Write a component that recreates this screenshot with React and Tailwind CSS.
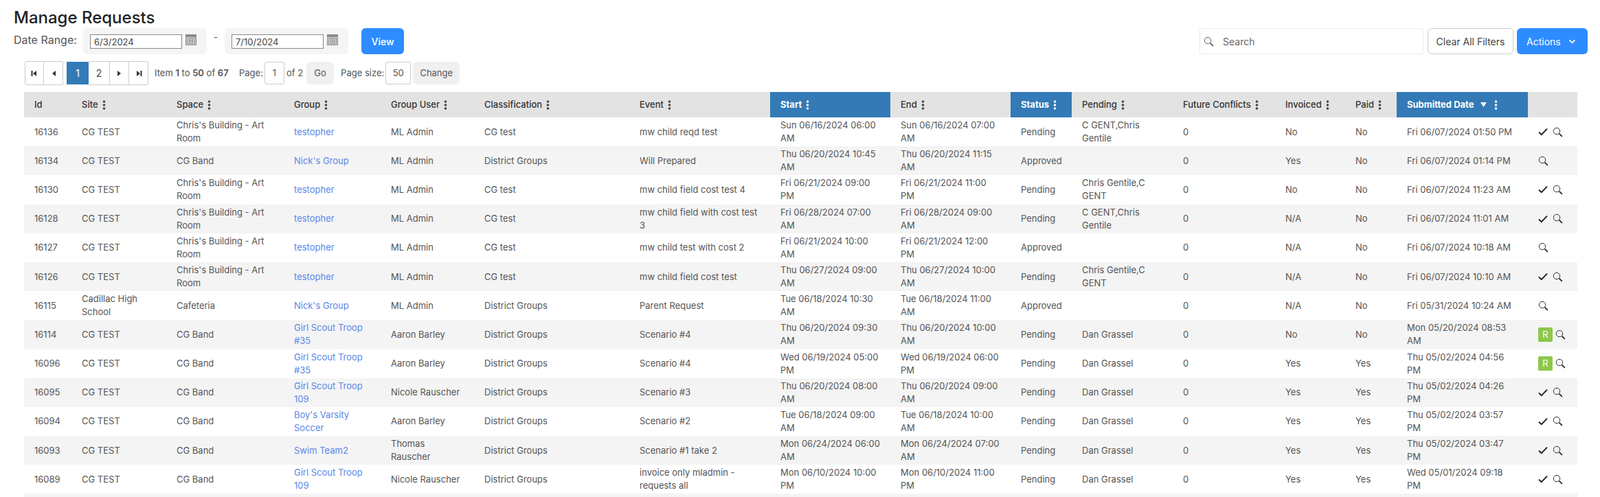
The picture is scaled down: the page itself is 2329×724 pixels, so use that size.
import React from 'react';

const building = "Chris's Building - Art Room";

const columns = [
  { label: 'Id', width: 'w-[69px]' },
  { label: 'Site', width: 'w-[138px]', menu: true },
  { label: 'Space', width: 'w-[171px]', menu: true },
  { label: 'Group', width: 'w-[141px]', menu: true },
  { label: 'Group User', width: 'w-[136px]', menu: true },
  { label: 'Classification', width: 'w-[226px]', menu: true },
  { label: 'Event', width: 'w-[205px]', menu: true },
  { label: 'Start', width: 'w-[175px]', menu: true, sorted: true },
  { label: 'End', width: 'w-[175px]', menu: true },
  { label: 'Status', width: 'w-[89px]', menu: true, sorted: true },
  { label: 'Pending', width: 'w-[147px]', menu: true },
  { label: 'Future Conflicts', width: 'w-[149px]', menu: true },
  { label: 'Invoiced', width: 'w-[102px]', menu: true },
  { label: 'Paid', width: 'w-[75px]', menu: true },
  { label: 'Submitted Date', width: 'w-[191px]', menu: true, sorted: true, arrow: true },
  { label: '', width: 'w-[72px]' },
];

const rows = [
  ['16136', 'CG TEST', building, 'testopher', 'ML Admin', 'CG test', 'mw child reqd test', 'Sun 06/16/2024 06:00 AM', 'Sun 06/16/2024 07:00 AM', 'Pending', 'C GENT,Chris Gentile', '0', 'No', 'No', 'Fri 06/07/2024 01:50 PM', 'check'],
  ['16134', 'CG TEST', 'CG Band', "Nick's Group", 'ML Admin', 'District Groups', 'Will Prepared', 'Thu 06/20/2024 10:45 AM', 'Thu 06/20/2024 11:15 AM', 'Approved', '', '0', 'Yes', 'No', 'Fri 06/07/2024 01:14 PM', 'view'],
  ['16130', 'CG TEST', building, 'testopher', 'ML Admin', 'CG test', 'mw child field cost test 4', 'Fri 06/21/2024 09:00 PM', 'Fri 06/21/2024 11:00 PM', 'Pending', 'Chris Gentile,C GENT', '0', 'No', 'No', 'Fri 06/07/2024 11:23 AM', 'check'],
  ['16128', 'CG TEST', building, 'testopher', 'ML Admin', 'CG test', 'mw child field with cost test 3', 'Fri 06/28/2024 07:00 AM', 'Fri 06/28/2024 09:00 AM', 'Pending', 'C GENT,Chris Gentile', '0', 'N/A', 'No', 'Fri 06/07/2024 11:01 AM', 'check'],
  ['16127', 'CG TEST', building, 'testopher', 'ML Admin', 'CG test', 'mw child test with cost 2', 'Fri 06/21/2024 10:00 AM', 'Fri 06/21/2024 12:00 PM', 'Approved', '', '0', 'N/A', 'No', 'Fri 06/07/2024 10:18 AM', 'view'],
  ['16126', 'CG TEST', building, 'testopher', 'ML Admin', 'CG test', 'mw child field cost test', 'Thu 06/27/2024 09:00 AM', 'Thu 06/27/2024 10:00 AM', 'Pending', 'Chris Gentile,C GENT', '0', 'N/A', 'No', 'Fri 06/07/2024 10:10 AM', 'check'],
  ['16115', 'Cadillac High School', 'Cafeteria', "Nick's Group", 'ML Admin', 'District Groups', 'Parent Request', 'Tue 06/18/2024 10:30 AM', 'Tue 06/18/2024 11:00 AM', 'Approved', '', '0', 'N/A', 'No', 'Fri 05/31/2024 10:24 AM', 'view'],
  ['16114', 'CG TEST', 'CG Band', 'Girl Scout Troop #35', 'Aaron Barley', 'District Groups', 'Scenario #4', 'Thu 06/20/2024 09:30 AM', 'Thu 06/20/2024 10:00 AM', 'Pending', 'Dan Grassel', '0', 'No', 'No', 'Mon 05/20/2024 08:53 AM', 'resend'],
  ['16096', 'CG TEST', 'CG Band', 'Girl Scout Troop #35', 'Aaron Barley', 'District Groups', 'Scenario #4', 'Wed 06/19/2024 05:00 PM', 'Wed 06/19/2024 06:00 PM', 'Pending', 'Dan Grassel', '0', 'Yes', 'Yes', 'Thu 05/02/2024 04:56 PM', 'resend'],
  ['16095', 'CG TEST', 'CG Band', 'Girl Scout Troop 109', 'Nicole Rauscher', 'District Groups', 'Scenario #3', 'Thu 06/20/2024 08:00 AM', 'Thu 06/20/2024 09:00 AM', 'Pending', 'Dan Grassel', '0', 'Yes', 'Yes', 'Thu 05/02/2024 04:26 PM', 'check'],
  ['16094', 'CG TEST', 'CG Band', "Boy's Varsity Soccer", 'Aaron Barley', 'District Groups', 'Scenario #2', 'Tue 06/18/2024 09:00 AM', 'Tue 06/18/2024 10:00 AM', 'Pending', 'Dan Grassel', '0', 'Yes', 'Yes', 'Thu 05/02/2024 03:57 PM', 'check'],
  ['16093', 'CG TEST', 'CG Band', 'Swim Team2', 'Thomas Rauscher', 'District Groups', 'Scenario #1 take 2', 'Mon 06/24/2024 06:00 AM', 'Mon 06/24/2024 07:00 AM', 'Pending', 'Dan Grassel', '0', 'Yes', 'Yes', 'Thu 05/02/2024 03:47 PM', 'check'],
  ['16089', 'CG TEST', 'CG Band', 'Girl Scout Troop 109', 'Nicole Rauscher', 'District Groups', 'invoice only mladmin - requests all', 'Mon 06/10/2024 10:00 PM', 'Mon 06/10/2024 11:00 PM', 'Pending', 'Dan Grassel', '0', 'Yes', 'Yes', 'Wed 05/01/2024 09:18 PM', 'check'],
];

const Magnifier = ({ className }) => (
  <svg viewBox="0 0 16 16" className={className} fill="none" stroke="currentColor">
    <circle cx="6.4" cy="6.4" r="5" strokeWidth="1" />
    <path d="M10.2 10.2 14.8 14.8" strokeWidth="1.8" />
  </svg>
);

const Check = () => (
  <svg viewBox="0 0 14 12" className="w-[14px] h-[12px] text-[#222]" fill="none" stroke="currentColor">
    <path d="M1 6.5 4.8 10.2 13 1.6" strokeWidth="2" />
  </svg>
);

const Kebab = ({ className = 'text-[#444]' }) => (
  <svg viewBox="0 0 5 14" className={`w-[5px] h-[14px] ${className}`} fill="currentColor">
    <circle cx="2.5" cy="2" r="1.8" />
    <circle cx="2.5" cy="7" r="1.8" />
    <circle cx="2.5" cy="12" r="1.8" />
  </svg>
);

const CalendarIcon = () => (
  <svg viewBox="0 0 16 16" className="w-[16px] h-[16px] ml-[5px]" fill="none">
    <rect x="0.5" y="0.5" width="15" height="15" fill="#d9d9d9" stroke="#8a8a8a" />
    <rect x="0.5" y="0.5" width="15" height="3" fill="#8a8a8a" stroke="#8a8a8a" />
    <rect x="2.5" y="5.5" width="11" height="8" fill="#f4f4f4" stroke="#8a8a8a" />
    <path d="M5.5 5.5v8M8 5.5v8M10.5 5.5v8M2.5 8.2h11M2.5 10.8h11" stroke="#8a8a8a" />
  </svg>
);

const PagerArrow = ({ dir, bar }) => (
  <svg viewBox="0 0 10 10" className={`w-[10px] h-[10px] ${dir === 'left' ? '' : 'rotate-180'}`} fill="#333">
    <path d="M8 1v8L3 5z" />
    {bar && <rect x="0.5" y="1" width="2" height="8" />}
  </svg>
);

const DateField = ({ value }) => (
  <div className="w-[180px] h-[38px] bg-[#f5f5f5] rounded-md flex items-start pt-[9px] pl-[10px]">
    <input readOnly value={value} className="w-[134px] h-[21px] border border-[#888] bg-white px-[5px] text-[13px] text-[#444] outline-none" />
    <CalendarIcon />
  </div>
);

const PagerButton = ({ className = '', children }) => (
  <button className={`h-[33px] flex items-center justify-center text-[14px] text-[#444] ${className}`}>
    {children}
  </button>
);

const ActionCell = ({ type }) => {
  if (type === 'view') return <Magnifier className="w-[15px] h-[15px] text-[#222]" />;
  return (
    <div className="flex items-center">
      {type === 'check' ? (
        <Check />
      ) : (
        <span className="w-[21px] h-[21px] rounded-[2px] bg-[#8cc84b] text-white text-[13px] flex items-center justify-center">R</span>
      )}
      <Magnifier className={`w-[15px] h-[15px] text-[#222] ${type === 'check' ? 'ml-[7px]' : 'ml-[4px]'}`} />
    </div>
  );
};

export default function App() {
  return (
    <div className="h-screen overflow-hidden bg-white pt-[10px] pl-[20px] pr-[18px] text-[#555] font-['Inter',sans-serif]">
      <h1 className="text-[24px] leading-[31px] font-medium text-[#222]">Manage Requests</h1>

      <div className="flex items-center justify-between">
        <div className="flex items-center">
          <span className="text-[16px] w-[101px] -mt-[4px]">Date Range:</span>
          <DateField value="6/3/2024" />
          <span className="w-[26px] text-center text-[14px] -mt-[14px]">-</span>
          <DateField value="7/10/2024" />
          <button className="ml-[19px] w-[62px] h-[38px] rounded-md bg-[#2d8cff] text-white text-[14px] font-medium">View</button>
        </div>

        <div className="flex items-center">
          <div className="w-[326px] h-[38px] border border-[#ececec] rounded-[3px] flex items-center pl-[5px]">
            <Magnifier className="w-[15px] h-[15px] text-[#555]" />
            <span className="ml-[13px] text-[14px] text-[#666]">Search</span>
          </div>
          <button className="ml-[6px] w-[125px] h-[38px] border border-[#ccc] rounded-md text-[14px] text-[#444]">Clear All Filters</button>
          <button className="ml-[5px] w-[103px] h-[38px] rounded-md bg-[#2d8cff] text-white text-[14px] flex items-center pl-[14px]">
            Actions
            <svg viewBox="0 0 12 8" className="w-[11px] h-[7px] ml-[11px]" fill="none" stroke="currentColor">
              <path d="M1.5 1.5 6 6l4.5-4.5" strokeWidth="2" />
            </svg>
          </button>
        </div>
      </div>

      <div className="flex items-center mt-[10px] ml-[16px] text-[13px]">
        <div className="flex border border-[#ccc] rounded-l-[3px]">
          <PagerButton className="w-[27px] border-r border-[#ccc] h-[31px]"><PagerArrow dir="left" bar /></PagerButton>
          <PagerButton className="w-[27px] h-[31px]"><PagerArrow dir="left" /></PagerButton>
        </div>
        <PagerButton className="w-[32px] ml-[5px] bg-[#337ab7] text-white">1</PagerButton>
        <div className="flex border border-l-0 border-[#ccc] rounded-r-[3px]">
          <PagerButton className="w-[31px] h-[31px] border-r border-[#ccc]">2</PagerButton>
          <PagerButton className="w-[28px] h-[31px] border-r border-[#ccc]"><PagerArrow dir="right" /></PagerButton>
          <PagerButton className="w-[27px] h-[31px]"><PagerArrow dir="right" bar /></PagerButton>
        </div>
        <span className="ml-[9px] w-[110px] whitespace-nowrap">Item <b className="font-semibold">1</b> to <b className="font-semibold">50</b> of <b className="font-semibold">67</b></span>
        <span className="ml-[13px]">Page:</span>
        <span className="ml-[2px] w-[29px] h-[33px] border border-[#ccc] rounded-[3px] flex items-center justify-center">1</span>
        <span className="ml-[3px]">of 2</span>
        <button className="ml-[5px] w-[40px] h-[33px] rounded-md bg-[#f0f0f0]">Go</button>
        <span className="ml-[10px]">Page size:</span>
        <span className="ml-[2px] w-[37px] h-[33px] border border-[#ccc] rounded-[3px] flex items-center justify-center">50</span>
        <button className="ml-[3px] w-[68px] h-[33px] rounded-md bg-[#f0f0f0]">Change</button>
      </div>

      <table className="mt-[10px] ml-[15px] w-[2261px] table-fixed border-collapse text-[13px] leading-[19px]">
        <colgroup>
          {columns.map((col, i) => <col key={i} className={col.width} />)}
        </colgroup>
        <thead>
          <tr className="h-[37px] bg-[#e3e3e3]">
            {columns.map((col, i) => (
              <th key={i} className={`px-[15px] text-left font-medium ${col.sorted ? 'bg-[#337ab7] text-white' : 'text-[#333]'}`}>
                <div className={`flex items-center ${col.sorted ? 'font-bold' : ''}`}>
                  {col.label}
                  {col.arrow && (
                    <svg viewBox="0 0 10 8" className="w-[9px] h-[7px] ml-[10px]" fill="currentColor"><path d="M0 0h10L5 8z" /></svg>
                  )}
                  {col.menu && <Kebab className={`${col.arrow ? 'ml-[11px]' : 'ml-[6px]'} ${col.sorted ? 'text-white' : 'text-[#444]'}`} />}
                </div>
              </th>
            ))}
          </tr>
        </thead>
        <tbody>
          {rows.map((row, r) => (
            <tr key={row[0]} className={`h-[42.2px] ${r % 2 ? 'bg-[#f4f4f4]' : 'bg-white'}`}>
              {row.map((cell, c) => (
                <td key={c} className={`px-[15px] py-0 ${c === 3 ? 'text-[#5a86e6]' : ''}`}>
                  {c === 15 ? <ActionCell type={cell} /> : cell}
                </td>
              ))}
            </tr>
          ))}
          <tr className="h-[42.2px] bg-[#f4f4f4]"><td colSpan={16} /></tr>
        </tbody>
      </table>
    </div>
  );
}
